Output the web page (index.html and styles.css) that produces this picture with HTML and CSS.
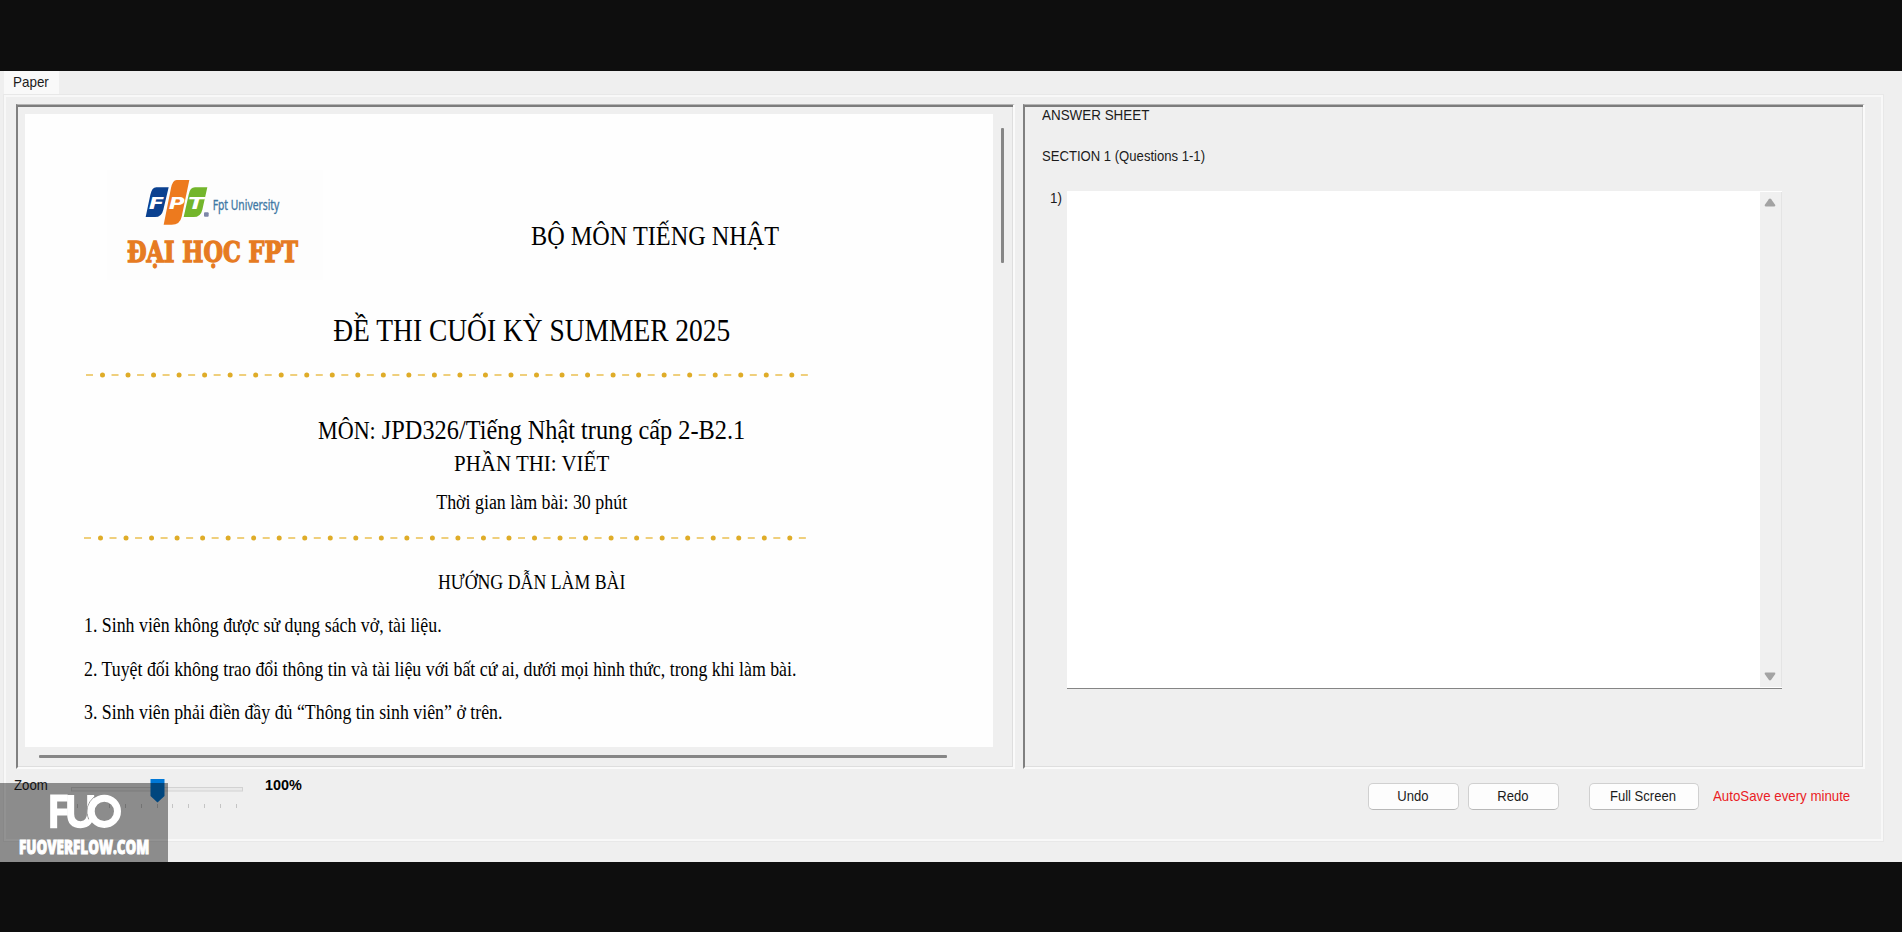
FILE: index.html
```html
<!DOCTYPE html>
<html lang="vi">
<head>
<meta charset="utf-8">
<title>Paper</title>
<link rel="stylesheet" href="styles.css">
</head>
<body>
<main class="window">
  <div class="tabs"><div class="tab"><span class="cond">Paper</span></div></div>
  <section class="tab-page">
    <div class="panels">
      <div class="panel paper-panel">
        <article class="sheet">
          <header class="sheet-head">
            <svg class="logo" viewBox="321 330 648 330">
              <rect x="321" y="330" width="648" height="330" fill="#fdfdfd"/>
              <path d="M469 382H506L490 449Q485 471 465 471H437L451 404Q456 382 469 382Z" fill="#0b4190"/>
              <path d="M530 360H568L545 470Q540 494 515 494H491L513 384Q518 360 530 360Z" fill="#ed7a1e"/>
              <path d="M585 382H622L607 449Q602 471 581 471H551L566 404Q570 382 585 382Z" fill="#73b52b"/>
              <g class="logo-letters">
                <text x="446" y="446" textLength="46" lengthAdjust="spacingAndGlyphs">F</text>
                <text x="506" y="446" textLength="48" lengthAdjust="spacingAndGlyphs">P</text>
                <text x="564" y="446" textLength="48" lengthAdjust="spacingAndGlyphs">T</text>
              </g>
              <rect x="612" y="457" width="14" height="13" rx="3" fill="#7d86a8"/>
              <text class="logo-name" x="638" y="450" textLength="200" lengthAdjust="spacingAndGlyphs">Fpt University</text>
              <text class="logo-uni" x="381" y="605" textLength="513" lengthAdjust="spacingAndGlyphs">ĐẠI HỌC FPT</text>
            </svg>
            <div class="dept"><span class="cond">BỘ MÔN TIẾNG NHẬT</span></div>
          </header>
          <div class="line title"><span class="cond">ĐỀ THI CUỐI KỲ SUMMER 2025</span></div>
          <svg class="rule rule-a" viewBox="0 0 730 10">
            <path class="dash" d="M3 5H725"/><path class="dot" d="M19.500 5H710"/>
          </svg>
          <div class="line subject"><span class="cond"><small>MÔN:</small> JPD326/Tiếng Nhật trung cấp 2-B2.1</span></div>
          <div class="line part"><span class="cond">PHẦN THI: VIẾT</span></div>
          <div class="line time"><span class="cond">Thời gian làm bài: 30 phút</span></div>
          <svg class="rule rule-b" viewBox="0 0 730 10">
            <path class="dash" d="M3 5H725"/><path class="dot" d="M19.500 5H710"/>
          </svg>
          <div class="line guide"><span class="cond">HƯỚNG DẪN LÀM BÀI</span></div>
          <div class="items">
            <div><span class="cond">1. Sinh viên không được sử dụng sách vở, tài liệu.</span></div>
            <div><span class="cond">2. Tuyệt đối không trao đổi thông tin và tài liệu với bất cứ ai, dưới mọi hình thức, trong khi làm bài.</span></div>
            <div><span class="cond">3. Sinh viên phải điền đầy đủ “Thông tin sinh viên” ở trên.</span></div>
          </div>
        </article>
        <div class="vscroll"><div class="vthumb"></div></div>
        <div class="hscroll"><div class="hthumb"></div></div>
      </div>
      <div class="panel answer-panel">
        <div class="answer-title"><span class="cond">ANSWER SHEET</span></div>
        <div class="answer-section"><span class="cond">SECTION 1 (Questions 1-1)</span></div>
        <div class="question">
          <div class="number"><span class="cond">1)</span></div>
          <div class="textbox">
            <div class="textbox-scroll">
              <svg viewBox="0 0 12 9"><path d="M4.8 1.2Q6 0 7.2 1.2L11.3 7Q11.6 8.4 10.3 8.4H1.7Q.4 8.4 .7 7Z"/></svg>
              <svg viewBox="0 0 12 9"><path d="M4.8 7.8Q6 9 7.2 7.8L11.3 2Q11.6 .6 10.3 .6H1.7Q.4 .6 .7 2Z"/></svg>
            </div>
          </div>
        </div>
      </div>
    </div>
    <footer class="bar">
      <div class="zoom-label"><span class="cond">Zoom</span></div>
      <svg class="slider" viewBox="0 0 176 32">
        <rect x="1.5" y="9.5" width="171" height="3.500" fill="#e9e9e9" stroke="#d2d2d2"/>
        <path class="ticks" d="M7.5 26v4M23.5 26v4M39.5 26v4M55.5 26v4M71.5 26v4M87.5 26v4M102.5 26v4M118.5 26v4M134.5 26v4M150.5 26v4M166.5 26v4"/>
        <path d="M80.500 1H94.500V18L87.500 24.500L80.500 18Z" fill="#0078d7"/>
      </svg>
      <div class="percent"><span class="cond">100%</span></div>
      <div class="actions">
        <button class="btn"><span class="cond">Undo</span></button>
        <button class="btn"><span class="cond">Redo</span></button>
        <button class="btn wide"><span class="cond">Full Screen</span></button>
        <div class="autosave"><span class="cond">AutoSave every minute</span></div>
      </div>
    </footer>
  </section>
  <svg class="watermark" viewBox="0 129 504 237">
    <rect x="0" y="129" width="504" height="237" fill="#000" fill-opacity=".41"/>
    <g class="fuo">
      <path d="M161 265V174H203M161 216H203"/>
      <path d="M212 165V222Q212 254 242 254Q272 254 272 214V165"/>
      <path class="ring-gap" d="M283 170Q250 200 266 238"/>
      <circle cx="313" cy="214" r="39.500"/>
    </g>
    <text class="site" x="57" y="341" textLength="391" lengthAdjust="spacingAndGlyphs">FUOVERFLOW.COM</text>
  </svg>
</main>
</body>
</html>
```
FILE: styles.css
```css
* { box-sizing: border-box; }
body {
  margin: 0;
  height: 932px;
  padding: 71px 0 70px;
  background: #0e0e0e;
  overflow: hidden;
  font: 15px/18px "Liberation Sans", Arial, sans-serif;
  color: #1b1b1b;
}
.cond {
  display: inline-block;
  white-space: nowrap;
  transform: scaleX(.895);
  transform-origin: left center;
}
.window {
  position: relative;
  height: 791px;
  padding: 0 19px 0 4px;
  background: #efefef;
}
.tabs { display: flex; height: 24px; }
.tab { width: 55px; padding: 2px 0 0 9px; background: #f9f9f9; }
.tab-page {
  height: 746px;
  padding: 7px 15px 0 10px;
  border: 2px solid #f8f8f8;
  outline: 1px solid #e8e8e8;
}
.panels { display: flex; gap: 8px; }
.panel {
  height: 665px;
  border-style: solid;
  border-width: 1px 2px 2px;
  border-color: #b4b4b4 #fafafa #fafafa #808080;
  box-shadow: inset 0 2px 0 #7c7c7c, inset -1px -1px 0 #dedede;
}
.paper-panel {
  width: 999px;
  display: grid;
  grid-template: 642px 20px / 977px 18px;
}
.sheet {
  margin: 9px 0 0 7px;
  width: 968px;
  height: 633px;
  background: #fefefe;
  color: #000;
  font: 20px/24px "Liberation Serif", "Times New Roman", serif;
}
.sheet-head { display: flex; height: 165px; padding: 56px 0 0 82px; }
.logo { width: 216px; height: 110px; flex: none; overflow: visible; }
.logo-letters { font: bold italic 46px "DejaVu Sans", sans-serif; fill: #fff; }
.logo-name { font: 42px "Noto Sans", sans-serif; fill: #3f78a4; stroke: #3f78a4; stroke-width: 1; }
.logo-uni { font: bold 83px "DejaVu Serif", serif; fill: #e67b22; stroke: #e67b22; stroke-width: 4; }
.dept { margin: 50px 0 0 207.500px; font-size: 27.1px; line-height: 32px; }
.line { width: 897px; margin-left: 58px; text-align: center; }
.line .cond { transform-origin: center; }
.title { margin-top: 34px; font-size: 30.7px; line-height: 36px; }
.rule { display: block; width: 730px; height: 10px; }
.rule path { fill: none; }
.rule-a { margin: 21px 0 0 58px; }
.rule-b { margin: 19px 0 0 56px; }
.dash { stroke: #efcf7c; stroke-width: 2; stroke-dasharray: 7 18.53; }
.dot { stroke: #dfac28; stroke-width: 5; stroke-linecap: round; stroke-dasharray: 0 25.53; }
.subject { margin-top: 35px; font-size: 27.200px; line-height: 30px; }
.subject small { font-size: 24.7px; }
.part { margin-top: 2px; font-size: 23.4px; line-height: 30px; }
.time { margin-top: 12px; }
.guide { margin-top: 27px; font-size: 19.900px; }
.items { display: grid; gap: 19.700px; margin: 19px 0 0 58.500px; font-size: 19.930px; }
.items div { height: 24px; }
.vscroll { padding: 23px 0 0 6px; }
.vthumb { width: 3px; height: 135px; border-radius: 1px; background: #868686; }
.hscroll { padding: 8px 0 0 21px; }
.hthumb { width: 908px; height: 3px; border-radius: 1px; background: #868686; }
.answer-panel { width: 842px; padding: 1px 0 0 17px; }
.answer-title { height: 41px; }
.answer-section { height: 44px; }
.answer-section .cond { transform: scaleX(.873); }
.question { display: flex; }
.number { width: 25px; padding: 0 0 0 8px; margin-top: -2px; }
.textbox {
  display: flex;
  justify-content: flex-end;
  width: 715px;
  height: 498px;
  background: #fff;
  border-bottom: 1px solid #858585;
}
.textbox-scroll {
  display: flex;
  flex-direction: column;
  justify-content: space-between;
  align-items: center;
  width: 22px;
  margin: 1px 0 1px;
  padding: 6px 1px 6px 0;
  background: #f0f0f0;
  border-right: 1px solid #e4e4e4;
}
.textbox-scroll svg { width: 12px; height: 9px; fill: #a3a3a3; }
.bar { display: flex; }
.zoom-label { width: 54px; padding: 7px 0 0; margin-left: -2px; }
.zoom-label .cond { transform: scaleX(.88); }
.slider { width: 176px; height: 32px; margin: 9px 0 0 2px; }
.ticks { stroke: #c4c4c4; stroke-width: 1; }
.percent { margin: 7px 0 0 19px; font-weight: bold; color: #000; }
.percent .cond { transform: scaleX(.96); }
.actions { display: flex; margin: 14px 4px 0 auto; }
.btn {
  width: 91px;
  height: 27px;
  margin-right: 9px;
  padding: 0 2px 2px 0;
  border: 1px solid #d0d0d0;
  border-bottom-color: #b8b8b8;
  border-radius: 5px;
  background: #fdfdfd;
  color: #1b1b1b;
  font: inherit;
}
.btn .cond { transform: scaleX(.87); transform-origin: center; }
.btn.wide { width: 110px; margin: 0 14px 0 21px; }
.autosave { width: 149px; padding-top: 4px; color: #ea1c24; }
.autosave .cond { transform: scaleX(.885); }
.watermark { position: absolute; left: 0; bottom: 0; width: 168px; height: 79px; overflow: visible; }
.fuo { fill: none; stroke: #fff; stroke-width: 21; }
.fuo .ring-gap { stroke: #999; stroke-width: 3; }
.site { font: 800 58px "Open Sans", "Liberation Sans", sans-serif; fill: #fff; stroke: #fff; stroke-width: 3; }
```
